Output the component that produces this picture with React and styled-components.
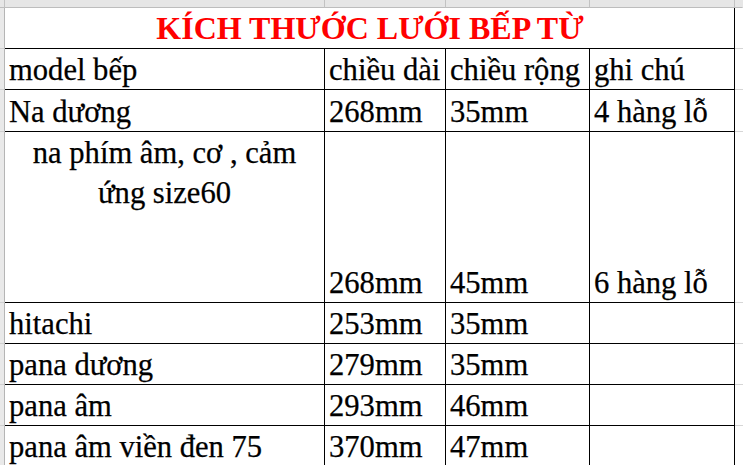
import styled, { createGlobalStyle } from "styled-components";

const GlobalStyle = createGlobalStyle`
  body {
    margin: 0;
    background: #fff;
  }
`;

const Sheet = styled.div`
  display: grid;
  grid-template-columns: 5px 320px 121px 144px 145px 1fr;
  grid-template-rows: 8px 41px 41px 42px 171px 41px 41px 41px 41px;
  width: 743px;
  height: 465px;
  overflow: hidden;
  font-family: "Liberation Serif", "Times New Roman", serif;
  font-size: 30.6px;
  color: #000;
  background: #fff;
`;

const TopStrip = styled.div`
  background: #e6e6e6;
  border-bottom: 1px solid #bdbdbd;
  border-right: 1px solid ${(p) => (p.$last ? "transparent" : "#c2c2c2")};
`;

const RowHead = styled.div`
  background: #e9e9e9;
  border-right: 1px solid #b5b5b5;
  border-bottom: 1px solid #cfcfcf;
`;

const Cell = styled.div`
  display: flex;
  flex-direction: column;
  align-items: ${(p) => (p.$center ? "center" : "flex-start")};
  justify-content: ${(p) => (p.$top ? "flex-start" : "flex-end")};
  text-align: ${(p) => (p.$center ? "center" : "left")};
  padding: ${(p) => (p.$top ? "1px 4px 0" : "0 3px 1px 4px")};
  line-height: ${(p) => (p.$top ? "40px" : "normal")};
  border-right: 1px solid #000;
  border-bottom: 1px solid #000;
  white-space: nowrap;
  overflow: hidden;
  -webkit-text-stroke: 0.25px currentColor;
`;

const Title = styled(Cell)`
  grid-column: span 4;
  align-items: center;
  font-size: 32px;
  font-weight: 700;
  color: #ff0000;
  -webkit-text-stroke: 0;
`;

const Spare = styled.div`
  border-bottom: 1px solid #d6d6d6;
`;

const rows = [
  { cells: ["model bếp", "chiều dài", "chiều rộng", "ghi chú"] },
  { cells: ["Na dương", "268mm", "35mm", "4 hàng lỗ"] },
  {
    cells: [["na phím âm, cơ , cảm", "ứng size60"], "268mm", "45mm", "6 hàng lỗ"],
    wrapFirst: true,
  },
  { cells: ["hitachi", "253mm", "35mm", ""] },
  { cells: ["pana dương", "279mm", "35mm", ""] },
  { cells: ["pana âm", "293mm", "46mm", ""] },
  { cells: ["pana âm viền đen 75", "370mm", "47mm", ""] },
];

export default function App() {
  return (
    <>
      <GlobalStyle />
      <Sheet>
        {[0, 1, 2, 3, 4, 5].map((i) => (
          <TopStrip key={`t${i}`} $last={i === 5} />
        ))}

        <RowHead />
        <Title>KÍCH THƯỚC LƯỚI BẾP TỪ</Title>
        <Spare />

        {rows.map((row, r) => [
          <RowHead key={`h${r}`} />,
          ...row.cells.map((c, i) =>
            row.wrapFirst && i === 0 ? (
              <Cell key={`${r}-${i}`} $top $center>
                {c.map((line) => (
                  <span key={line}>{line}</span>
                ))}
              </Cell>
            ) : (
              <Cell key={`${r}-${i}`}>{c}</Cell>
            )
          ),
          <Spare key={`s${r}`} />,
        ])}
      </Sheet>
    </>
  );
}
